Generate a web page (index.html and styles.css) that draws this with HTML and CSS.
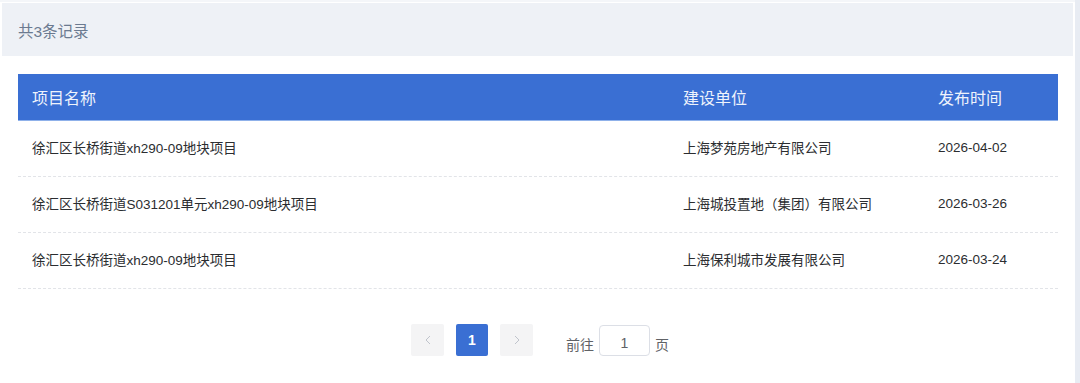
FILE: index.html
```html
<!DOCTYPE html>
<html lang="zh-CN">
<head>
<meta charset="utf-8">
<title>记录列表</title>
<link rel="stylesheet" href="styles.css">
</head>
<body>
<div class="page">
  <div class="main">
    <div class="summary">共3条记录</div>
    <div class="table">
      <div class="row head">
        <div class="c-name">项目名称</div>
        <div class="c-unit">建设单位</div>
        <div class="c-date">发布时间</div>
      </div>
      <div class="row">
        <div class="c-name">徐汇区长桥街道xh290-09地块项目</div>
        <div class="c-unit">上海梦苑房地产有限公司</div>
        <div class="c-date">2026-04-02</div>
      </div>
      <div class="row">
        <div class="c-name">徐汇区长桥街道S031201单元xh290-09地块项目</div>
        <div class="c-unit">上海城投置地（集团）有限公司</div>
        <div class="c-date">2026-03-26</div>
      </div>
      <div class="row">
        <div class="c-name">徐汇区长桥街道xh290-09地块项目</div>
        <div class="c-unit">上海保利城市发展有限公司</div>
        <div class="c-date">2026-03-24</div>
      </div>
    </div>
    <div class="pager">
      <button class="pbtn nav" aria-label="上一页">
        <svg width="8" height="10" viewBox="0 0 8 10"><path d="M6 1 L2 5 L6 9" fill="none" stroke="#c0c4cc" stroke-width="1"/></svg>
      </button>
      <button class="pbtn active">1</button>
      <button class="pbtn nav" aria-label="下一页">
        <svg width="8" height="10" viewBox="0 0 8 10"><path d="M2 1 L6 5 L2 9" fill="none" stroke="#c0c4cc" stroke-width="1"/></svg>
      </button>
      <div class="jump">
        <span class="jlabel">前往</span>
        <span class="jinput">1</span>
        <span class="jlabel">页</span>
      </div>
    </div>
  </div>
  <div class="scrollbar"></div>
</div>
</body>
</html>
```
FILE: styles.css
```css
html, body {
  margin: 0;
  padding: 0;
  background: #ffffff;
}
body {
  font-family: "Liberation Sans", "Noto Sans CJK SC", sans-serif;
  color: #303133;
}
.page {
  display: flex;
  height: 383px;
  overflow: hidden;
}
.main {
  width: 1075px;
  padding-top: 3px;
  background: linear-gradient(#f4f6f9 0, #f4f6f9 2px, #ffffff 2px);
}
.scrollbar {
  width: 5px;
  background: #e8ecf3;
}
.summary {
  margin-left: 2px;
  width: 1071px;
  height: 53px;
  box-sizing: border-box;
  padding-left: 16px;
  display: flex;
  align-items: center;
  background: #eef1f6;
  font-size: 15.5px;
  color: #6b7a90;
}
.table {
  margin: 18px 0 0 18px;
  width: 1040px;
}
.row {
  display: flex;
  align-items: center;
  height: 56px;
  padding-bottom: 3px;
  border-bottom: 1px dashed #e2e4e8;
  box-sizing: border-box;
  font-size: 13.5px;
  color: #2b2d30;
}
.row.head {
  height: 47px;
  padding-bottom: 0;
  background: #3a6fd3;
  border-bottom: 1px solid #8fb1ea;
  color: #eef3fc;
  font-size: 16px;
}
.c-name {
  width: 651px;
  padding-left: 14px;
  box-sizing: border-box;
}
.c-unit {
  width: 255px;
  padding-left: 14px;
  box-sizing: border-box;
}
.c-date {
  width: 134px;
  padding-left: 14px;
  box-sizing: border-box;
}
.pager {
  display: flex;
  align-items: center;
  margin: 35px 0 0 411px;
  gap: 12px;
  height: 32px;
}
.pbtn {
  width: 33px;
  height: 32px;
  border: 0;
  border-radius: 2px;
  padding: 0;
  display: flex;
  align-items: center;
  justify-content: center;
  font-family: "Liberation Sans", sans-serif;
  font-size: 14px;
  font-weight: bold;
  background: #f4f4f5;
}
.pbtn.active {
  width: 32px;
  background: #3a6fd3;
  color: #ffffff;
}
.jump {
  display: flex;
  align-items: center;
  gap: 5px;
  margin-left: 21px;
  font-size: 14px;
  color: #606266;
}
.jlabel {
  padding-top: 8px;
}
.jinput {
  width: 51px;
  height: 31px;
  box-sizing: border-box;
  border: 1px solid #dcdfe6;
  border-radius: 4px;
  display: flex;
  align-items: center;
  justify-content: center;
  font-family: "Liberation Sans", sans-serif;
  font-size: 14px;
  color: #606266;
  padding-top: 6px;
}
```
